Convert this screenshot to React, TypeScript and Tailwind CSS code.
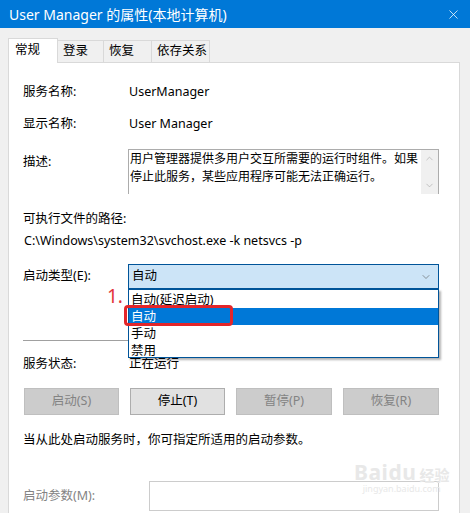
import { X, ChevronDown, ChevronUp } from "lucide-react";

const FONT = {
  fontFamily: '"Noto Sans", "Noto Sans CJK SC", sans-serif',
};

const tabs = [
  { label: "常规", w: "w-[50px]" },
  { label: "登录", w: "w-[46px]" },
  { label: "恢复", w: "w-[48px]" },
  { label: "依存关系", w: "w-[58px]" },
];
const options = ["自动(延迟启动)", "自动", "手动", "禁用"];

const ServiceProps = () => {
  return (
    <div
      className="relative w-[470px] h-[513px] overflow-hidden bg-[#f0f0f0] text-[12.5px] text-black"
      style={FONT}
    >
      {/* Title bar */}
      <div className="h-[28px] bg-[#0078d7] flex items-center justify-between pl-[9px] pr-[9px] text-white text-[14px]">
        <span>User Manager 的属性(本地计算机)</span>
        <X size={15} strokeWidth={1.2} />
      </div>

      {/* Tabs */}
      <div className="h-[34px] flex items-end pl-[8px]">
        {tabs.map((t, i) =>
          i === 0 ? (
            <div
              key={t.label}
              className={`${t.w} h-[25px] -mb-px bg-white border border-b-0 border-[#d9d9d9] pl-[6px] pt-[2px] relative z-10`}
            >
              {t.label}
            </div>
          ) : (
            <div
              key={t.label}
              className={`${t.w} h-[22px] border border-l-0 border-b-0 border-[#d9d9d9] pl-[5px] pt-[1px]`}
            >
              {t.label}
            </div>
          )
        )}
      </div>

      {/* Panel */}
      <div className="ml-[8px] w-[452px] h-[460px] bg-white border border-[#d9d9d9] pl-[14px] pr-[20px] flex flex-col">
        <div className="mt-[19px] h-[20px] flex items-center">
          <span className="w-[106px]">服务名称:</span>
          <span>UserManager</span>
        </div>
        <div className="mt-[12px] h-[20px] flex items-center">
          <span className="w-[106px]">显示名称:</span>
          <span>User Manager</span>
        </div>

        {/* Description */}
        <div className="mt-[15px] h-[45px] flex">
          <span className="w-[105px] pt-[4px]">描述:</span>
          <div className="flex-1 flex border border-[#acacac] border-b-0">
            <div className="flex-1 pl-[1px] leading-[18px] text-[12px]">
              用户管理器提供多用户交互所需要的运行时组件。如果停止此服务，某些应用程序可能无法正确运行。
            </div>
            <div className="w-[17px] bg-[#f0f0f0] flex flex-col items-center justify-between py-[3px] text-[#a3a3a3]">
              <ChevronUp size={11} strokeWidth={1.3} />
              <ChevronDown size={11} strokeWidth={1.3} />
            </div>
          </div>
        </div>

        <div className="mt-[15px] h-[20px] flex items-center">可执行文件的路径:</div>
        <div className="mt-[2px] h-[20px] flex items-center pl-[1px]">
          C:\Windows\system32\svchost.exe -k netsvcs -p
        </div>

        {/* Startup type */}
        <div className="mt-[13px] h-[25px] flex items-center">
          <span className="w-[105px]">启动类型(E):</span>
          <div className="relative flex-1 h-[25px]">
            <div className="h-full bg-[#cce4f7] border border-[#005499] flex items-center justify-between pl-[3px] pr-[6px]">
              <span>自动</span>
              <ChevronDown size={12} strokeWidth={1.2} className="text-[#555]" />
            </div>

            {/* Open list */}
            <div className="absolute left-0 top-[25px] w-full h-[69px] bg-white border border-[#005499] shadow-[2px_2px_2px_rgba(0,0,0,0.3)] z-20 flex flex-col pt-[1px]">
              {options.map((o, i) => (
                <div
                  key={o + i}
                  className={`h-[17px] leading-[17px] pl-[2px] ${
                    i === 1 ? "bg-[#0078d7] text-white" : ""
                  }`}
                >
                  {o}
                </div>
              ))}
              {/* annotation */}
              <div className="absolute left-[-5px] top-[15px] w-[109px] h-[21px] border-[3px] border-[#e3262a] rounded-[4px]" />
              <div className="absolute left-[-22px] top-[-6px] text-[19px] text-[#e3343a] leading-[24px]">
                1.
              </div>
            </div>
          </div>
        </div>

        <div className="mt-[51px] h-px bg-[#a0a0a0]" />

        <div className="mt-[13px] h-[20px] flex items-center">
          <span className="w-[106px]">服务状态:</span>
          <span>正在运行</span>
        </div>

        {/* Buttons */}
        <div className="mt-[14px] h-[27px] flex justify-between pl-[1px]">
          <div className="w-[95px] bg-[#cccccc] border border-[#bfbfbf] text-[#838383] flex items-center justify-center">
            启动(S)
          </div>
          <div className="w-[95px] bg-[#e1e1e1] border border-[#adadad] flex items-center justify-center">
            停止(T)
          </div>
          <div className="w-[96px] bg-[#cccccc] border border-[#bfbfbf] text-[#838383] flex items-center justify-center">
            暂停(P)
          </div>
          <div className="w-[96px] bg-[#cccccc] border border-[#bfbfbf] text-[#838383] flex items-center justify-center">
            恢复(R)
          </div>
        </div>

        <div className="mt-[15px] h-[20px] flex items-center">
          当从此处启动服务时，你可指定所适用的启动参数。
        </div>

        <div className="mt-[31px] h-[30px] flex items-center">
          <span className="w-[126px] text-[#838383]">启动参数(M):</span>
          <div className="flex-1 h-full border border-[#cccccc]" />
        </div>
      </div>

      {/* watermark */}
      <div className="absolute left-[354px] top-[462px] flex flex-col items-center text-[#e8e8e8] pointer-events-none">
        <div className="flex items-end gap-[3px] leading-none">
          <span className="text-[21px] font-bold tracking-wide">Baidu</span>
          <span className="text-[15px] font-bold">经验</span>
        </div>
        <span className="text-[9px] leading-[12px]">jingyan.baidu.com</span>
      </div>
    </div>
  );
};

export default function App() {
  return <ServiceProps />;
}
